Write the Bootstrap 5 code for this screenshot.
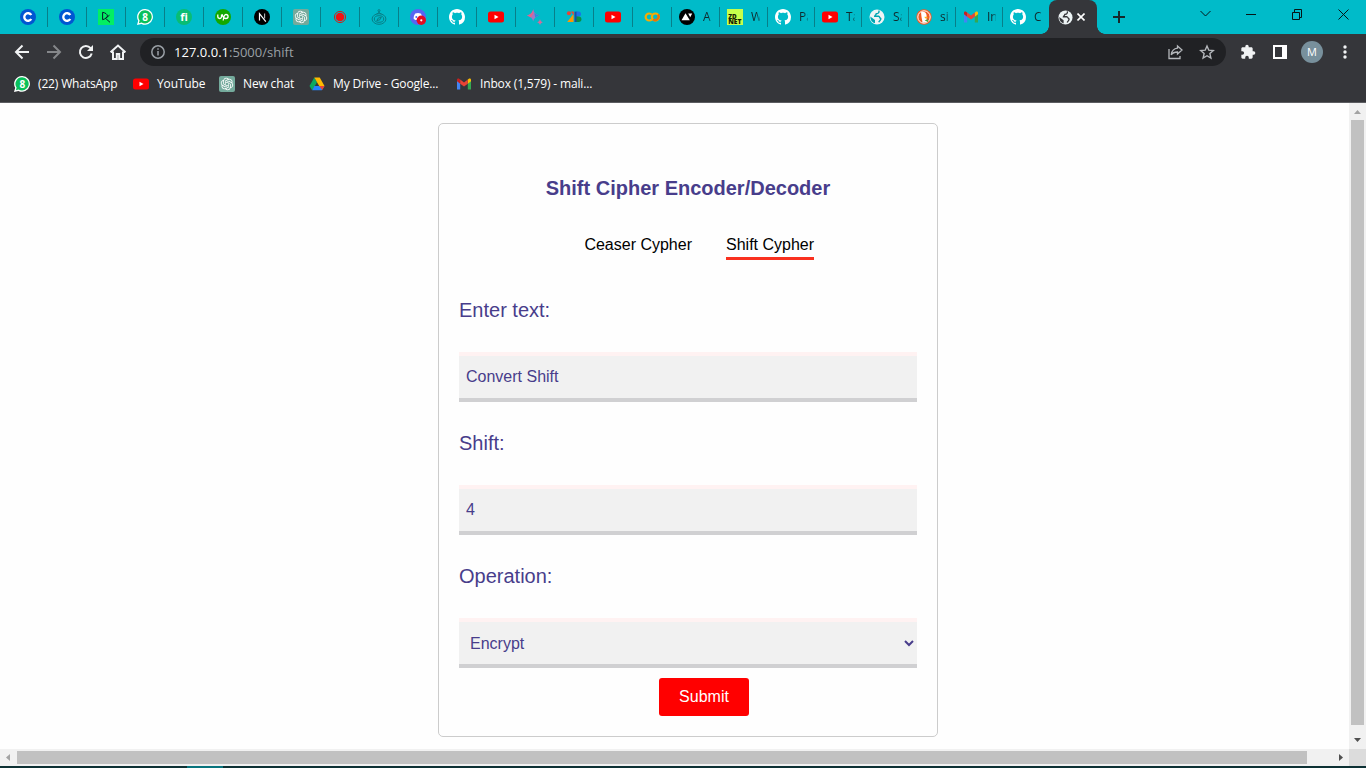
<!DOCTYPE html>
<html lang="en">
<head>
<meta charset="utf-8">
<meta name="viewport" content="width=device-width, initial-scale=1">
<title>Shift Cipher</title>
<link href="https://cdn.jsdelivr.net/npm/bootstrap@5.3.0/dist/css/bootstrap.min.css" rel="stylesheet">
<script src="https://cdn.jsdelivr.net/npm/bootstrap@5.3.0/dist/js/bootstrap.bundle.min.js" defer></script>
<style>
body { width:1366px; height:768px; overflow:hidden; font-family:"Open Sans","Noto Sans",sans-serif; font-size:12px; line-height:16px; }
svg { display:block; flex:none; }
.strip { height:34px; background:#00bbc9; padding-left:9px; }
.tab { height:34px; width:39px; padding-left:11px; position:relative; flex:none; }
.tab.wide { width:47px; padding-left:7px; gap:8px; color:#10292c; }
.tab.w48 { width:48px; }
.tab::after { content:""; position:absolute; right:0; top:7px; width:1px; height:20px; background:#087f89; }
.tab.nosep { width:46px; }
.tab.nosep::after { display:none; }
.tab span { width:9px; overflow:hidden; white-space:nowrap; -webkit-mask-image:linear-gradient(90deg,#000 55%,rgba(0,0,0,.3)); }
.tab-on { width:48px; height:34px; background:#35363a; border-radius:8px 8px 0 0; padding-left:9px; gap:4px; position:relative; flex:none; --g:#35363a; }
.tab-on::before,.tab-on::after { content:""; position:absolute; bottom:0; width:8px; height:8px; }
.tab-on::before { left:-8px; background:radial-gradient(circle at 0 0,transparent 7.5px,#35363a 8px); }
.tab-on::after { right:-8px; background:radial-gradient(circle at 100% 0,transparent 7.5px,#35363a 8px); }
.tools { height:36px; background:#35363a; padding:0 14px; }
.omni { height:28px; width:1086px; border-radius:14px; background:#202124; padding:0 11px; font-size:13px; margin-left:14px; color:#9aa0a6; }
.url { margin-left:9px; letter-spacing:.02px; }
.star { margin-left:16px; }
.ext { margin-left:14px; }
.side { margin-left:17px; }
.avatar { width:22px; height:22px; background:#78909c; font-size:11px; margin-left:14px; }
.dots { margin-left:20px; }
.marks { height:33px; background:#35363a; border-bottom:1px solid #5c5d61; padding:0 0 4px 14px; color:#fff; letter-spacing:-.15px; }
.marks span { white-space:nowrap; padding-left:8px; }
.view { height:646px; background:#fefefe; }
.cipher { width:500px; height:614px; margin:20px 0 0 438px; border:1px solid #ccc; border-radius:5px; padding:52px 20px 20px; color:#483d8b; background:#fefefe; font-family:"Liberation Sans",Arial,sans-serif; }
.cipher h1 { font-size:20px; line-height:24px; font-weight:700; margin:0 0 35px; }
.links { padding-left:125.4px; gap:34px; font-size:16px; line-height:20px; height:25px; }
.links a { color:#000; text-decoration:none; padding-bottom:2px; }
.links a.active { border-bottom:3px solid #f9301f; }
.cipher label { font-size:20px; line-height:24px; margin:29px 0 30px; display:block; }
.cipher .first { margin-top:38px; }
.field { width:100%; height:50px; display:block; border:0 solid; border-width:4px 0; border-color:#fff2f2 #fff #d0d0d2; background:#f1f1f1; color:#483d8b; font-size:16px; padding:0 7px; border-radius:0; outline:0; }
.field.pick { padding-right:0; }
.send { width:90px; height:38px; margin:10px 0 0 200px; background:#f00; color:#fff; border:0; border-radius:3px; font-size:16px; padding:0; line-height:36px; }
.vbar { width:17px; background:#f1f1f1; padding:0 2px; }
.vbar i { display:block; width:13px; height:605px; background:#c1c1c1; }
.hbar { height:17px; background:#f1f1f1; }
.hbar i { display:block; width:1290px; height:13px; background:#c1c1c1; }
.corner { width:17px; height:17px; background:#dcdcdc; }
.task { height:2px; background:#0d3134; padding-left:187px; }
.task i { display:block; width:36px; height:2px; background:#08747d; }
</style>
</head>
<body>
<svg class="position-absolute" width="0" height="0">
<defs>
<symbol id="c" viewBox="0 0 16 16"><circle cx="8" cy="8" r="8" fill="#0056d2"/><path d="M11.300 6A3.800 3.800 0 1 0 11.300 10" fill="none" stroke="#fff" stroke-width="2.300"/></symbol>
<symbol id="dc" viewBox="0 0 16 16"><path fill="#03ef62" d="M0 0h16v16H0z"/><path d="M4.600 10.700V3.300c2.700.5 4.800 1.900 4.800 3.600 0 1.600-2 3-4.800 3.800M11.500 6.200 7.500 9.300l4.500 4" fill="none" stroke="#05192d" stroke-width="1"/></symbol>
<symbol id="wa" viewBox="0 0 16 16"><path fill="#fff" d="M8.200 0a7.900 7.900 0 1 1-3.800 14.900L0 16l1.200-4.200A7.900 7.900 0 0 1 8.200 0z"/><path fill="#09c15b" d="M8.200 1.300a6.600 6.600 0 1 1-3.600 12.200L1.900 14.200l.7-2.600A6.600 6.600 0 0 1 8.200 1.300z"/><text x="8.2" y="11.7" text-anchor="middle" font-size="10" font-weight="700" font-family="Open Sans" fill="#fff">8</text></symbol>
<symbol id="fi" viewBox="0 0 16 16"><circle cx="8" cy="8" r="8" fill="#09bd73"/><text x="8" y="11.8" text-anchor="middle" font-size="11" font-weight="700" font-family="Open Sans" fill="#fff">fi</text></symbol>
<symbol id="up" viewBox="0 0 16 16"><circle cx="8" cy="8" r="8" fill="#13a800"/><path d="M2.800 5.400v2.200c0 2.500 3.700 2.500 3.700 0V5.400M7 5.200c1 3 2.100 4.300 3.900 4.300 2.900 0 2.900-4 0-4-1.800 0-2.200 1.700-2.700 6" fill="none" stroke="#fff" stroke-width="1.300"/></symbol>
<symbol id="nx" viewBox="0 0 16 16"><circle cx="8" cy="8" r="8"/><path d="M5.500 11.500V4.700l6.300 8" fill="none" stroke="#fff" stroke-width="1.200"/><path d="M10.600 4.500v5" stroke="#bbb" stroke-width="1.100"/></symbol>
<symbol id="ai" viewBox="0 0 16 16"><rect width="16" height="16" rx="2" fill="#74aa9c"/><path transform="translate(1.800 1.800) scale(.517)" fill="#fff" d="M22.2819 9.8211a5.9847 5.9847 0 0 0-.5157-4.9108 6.0462 6.0462 0 0 0-6.5098-2.9A6.0651 6.0651 0 0 0 4.9807 4.1818a5.9847 5.9847 0 0 0-3.9977 2.9 6.0462 6.0462 0 0 0 .7427 7.0966 5.98 5.98 0 0 0 .511 4.9107 6.051 6.051 0 0 0 6.5146 2.9001A5.9847 5.9847 0 0 0 13.2599 24a6.0557 6.0557 0 0 0 5.7718-4.2058 5.9894 5.9894 0 0 0 3.9977-2.9001 6.0557 6.0557 0 0 0-.7475-7.0729zm-9.022 12.6081a4.4755 4.4755 0 0 1-2.8764-1.0408l.1419-.0804 4.7783-2.7582a.7948.7948 0 0 0 .3927-.6813v-6.7369l2.02 1.1686a.071.071 0 0 1 .038.052v5.5826a4.504 4.504 0 0 1-4.4945 4.4944zm-9.6607-4.1254a4.4708 4.4708 0 0 1-.5346-3.0137l.142.0852 4.783 2.7582a.7712.7712 0 0 0 .7806 0l5.8428-3.3685v2.3324a.0804.0804 0 0 1-.0332.0615L9.74 19.9502a4.4992 4.4992 0 0 1-6.1408-1.6464zM2.3408 7.8956a4.485 4.485 0 0 1 2.3655-1.9728V11.6a.7664.7664 0 0 0 .3879.6765l5.8144 3.3543-2.0201 1.1685a.0757.0757 0 0 1-.071 0l-4.8303-2.7865A4.504 4.504 0 0 1 2.3408 7.872zm16.5963 3.8558L13.1038 8.364 15.1192 7.2a.0757.0757 0 0 1 .071 0l4.8303 2.7913a4.4944 4.4944 0 0 1-.6765 8.1042v-5.6772a.79.79 0 0 0-.407-.667zm2.0107-3.0231l-.142-.0852-4.7735-2.7818a.7759.7759 0 0 0-.7854 0L9.409 9.2297V6.8974a.0662.0662 0 0 1 .0284-.0615l4.8303-2.7866a4.4992 4.4992 0 0 1 6.6802 4.66zM8.3065 12.863l-2.02-1.1638a.0804.0804 0 0 1-.038-.0567V6.0742a4.4992 4.4992 0 0 1 7.3757-3.4537l-.142.0805L8.704 5.459a.7948.7948 0 0 0-.3927.6813zm1.0976-2.3654l2.602-1.4998 2.6069 1.4998v2.9994l-2.5974 1.4997-2.6067-1.4997Z"/></symbol>
<symbol id="rec" viewBox="0 0 16 16"><circle cx="8" cy="8" r="5.600" fill="none" stroke="#c0281f" stroke-width="1"/><circle cx="8" cy="8" r="4.300" fill="#f31111"/></symbol>
<symbol id="comp" viewBox="0 0 16 16"><g fill="none" stroke="#087e86" stroke-width="1"><circle cx="8" cy="1.600" r="1"/><path d="M8 2.800v1.400M5.500 5.200 8 3.500l2.500 1.700"/><ellipse cx="8" cy="10" rx="6.900" ry="5.300"/><ellipse cx="8" cy="10" rx="4.700" ry="3.300"/><path d="m5.800 11.700 1.300-2.500 3.200-1-1.300 2.500z"/></g></symbol>
<symbol id="disc" viewBox="0 0 16 16"><circle cx="8" cy="8" r="8" fill="#5865f2"/><path fill="#fff" d="M5.300 4.500c1.500-.7 3.900-.7 5.400 0 1.200 1.500 1.800 3.400 1.600 5.600-1.500 1-2.300 1-2.300 1H6s-.8 0-2.300-1c-.2-2.200.4-4.100 1.600-5.600z"/><circle cx="6.300" cy="8" r="1" fill="#5865f2"/><circle cx="11.300" cy="11.300" r="4.700" fill="#e20c20"/><circle cx="11.300" cy="11.300" r="1.100" fill="#fff"/></symbol>
<symbol id="gh" viewBox="0 0 16 16"><path fill="#fff" d="M8 0C3.580 0 0 3.580 0 8c0 3.540 2.290 6.530 5.470 7.590.4.070.55-.17.55-.38 0-.19-.01-.82-.01-1.490-2.010.37-2.530-.49-2.690-.94-.09-.23-.48-.94-.82-1.130-.28-.15-.68-.52-.01-.53.63-.01 1.080.58 1.230.82.72 1.210 1.870.87 2.330.66.07-.52.28-.87.51-1.070-1.780-.2-3.640-.89-3.640-3.950 0-.87.31-1.590.82-2.150-.08-.2-.36-1.020.08-2.120 0 0 .67-.21 2.200.82.64-.18 1.320-.27 2-.27s1.360.09 2 .27c1.530-1.040 2.200-.82 2.200-.82.44 1.100.16 1.920.08 2.120.51.56.82 1.270.82 2.150 0 3.070-1.870 3.750-3.650 3.950.29.25.54.73.54 1.480 0 1.070-.01 1.930-.01 2.200 0 .21.15.46.55.38A8.010 8.010 0 0 0 16 8c0-4.420-3.580-8-8-8"/></symbol>
<symbol id="yt" viewBox="0 0 16 16"><rect y="2.400" width="16" height="11.200" rx="2.500" fill="#f00"/><path fill="#fff" d="m6.500 5.700 4 2.300-4 2.300z"/></symbol>
<symbol id="spark" viewBox="0 0 16 16"><path fill="#a477c4" d="M6.200.3c.9 3.500 2.300 5 6.300 6.200-4 1.200-5.400 2.500-6.300 6-.9-3.500-2.200-4.800-6.200-6C4 5.300 5.300 3.800 6.200.3z"/><path fill="#e0648f" d="M6.200.3v4.500L4 8.500 0 6.500C4 5.300 5.300 3.800 6.200.3z"/><path fill="#268fe0" d="M7.200 3.600c.9 1.500 2.300 2.200 5.300 2.900-2 .6-3.300 1.200-4.300 2z"/><path fill="#d66a9b" d="M13 10.300c.5 1.700 1.200 2.400 2.900 2.900-1.700.5-2.400 1.200-2.900 2.900-.5-1.700-1.200-2.400-2.900-2.900 1.700-.5 2.400-1.200 2.900-2.900z"/></symbol>
<symbol id="ab" viewBox="0 0 16 16"><circle cx="2.900" cy="4.300" r="2" fill="#ea4335"/><path fill="#ff9800" d="M7.500 5v8H1.200z"/><path fill="#ea4335" d="M4.800 2.600h3v4z"/><path fill="#174ea6" d="M8.500 2.600h3v10.400h-3z"/><path fill="#1a73e8" d="M10.500 2.600h2a2.500 2.500 0 0 1 0 5h-2z"/><path fill="#0c8f45" d="M10.500 7.600h2.200a2.700 2.700 0 0 1 0 5.400h-2.200z"/></symbol>
<symbol id="co" viewBox="0 0 16 16"><circle cx="11.400" cy="8" r="3.500" fill="none" stroke="#f9ab00" stroke-width="2.200"/><path d="M7.700 5.600a3.500 3.500 0 1 0 0 4.800" fill="none" stroke="#f9ab00" stroke-width="2.200"/><path d="M9 10.400a3.500 3.500 0 0 0 4.900-4.900M2 10.600 6.800 5.300" fill="none" stroke="#e8710a" stroke-width="0"/><path d="M9 10.400a3.500 3.500 0 0 0 4.900-4.900" fill="none" stroke="#e8710a" stroke-width="2.200"/></symbol>
<symbol id="av" viewBox="0 0 16 16"><circle cx="8" cy="8" r="8"/><path fill="#fff" d="m6.500 4.300 4.300 7H2.500zM9.200 4.500h4l-2 3.700z"/></symbol>
<symbol id="zd" viewBox="0 0 16 16"><path fill="#c6ff4b" d="M0 0h16v16H0z"/><g font-family="Open Sans" font-size="6" font-weight="800" fill="#172000"><text x="1.2" y="10" textLength="8.500" lengthAdjust="spacingAndGlyphs">ZD</text><text x="1.2" y="14.700" textLength="13.300" lengthAdjust="spacingAndGlyphs">NET</text></g></symbol>
<symbol id="globe" viewBox="0 0 16 16"><circle cx="8" cy="8" r="7.500" fill="#edf4f5"/><path d="M10 1.500c.3 2.300-.7 3-2.700 3.200-.5 1.800-1.300 1.500-1.500 2.500h3.700c1.500.6.8 1.800 2.300 2.300.5 1.500-1.300 2-2 3.800" fill="none" stroke="var(--g)" stroke-width="1.400"/><path fill="var(--g)" d="M1.300 7.500 6 11v3.300C3 13.500 1.300 11 1.300 7.500z"/></symbol>
<symbol id="duck" viewBox="0 0 16 16"><circle cx="8" cy="8" r="7.700" fill="#f15a24"/><circle cx="8" cy="8" r="6.200" fill="none" stroke="#fff" stroke-width="1"/><path fill="#fff" d="M5 3.200c3-1.200 5.600.4 5.600 3.400 0 2.500-.5 3 .6 6.500l-4.600.7L5.500 8z"/><path fill="#fbb518" d="m8.500 7.700 4 .4-3.400 1.500z"/><path fill="#46a943" d="m8.600 11.300 3.600-1v2.900z"/></symbol>
<symbol id="gm" viewBox="0 0 16 16"><path fill="#4285f4" d="M1 4v9.400h3.200V7z"/><path fill="#34a853" d="M11.800 7v6.400H15V4z"/><path fill="#c5221f" d="M1 5.200V3.800c0-1.200 1.500-1.600 2.400-.9l.8.6v4.200z"/><path fill="#fbbc04" d="M15 5.200V3.800c0-1.200-1.500-1.600-2.400-.9l-.8.6v4.200z"/><path fill="#ea4335" d="M4.200 3.500 8 6.400l3.800-2.900v4.200L8 10.600 4.200 7.700z"/></symbol>
<symbol id="dr" viewBox="0 0 16 16"><path fill="#0da960" d="M5.300 1.500 8 6.200 3.200 14.300.5 10z"/><path fill="#ffba00" d="M5.300 1.500h5.400l4.800 8.500h-5.300z"/><path fill="#2684fc" d="M5.300 10h10.200l-2.700 4.300H3.200z"/><path fill="#ea4335" d="M10.200 10h5.300l-2.300 4z"/></symbol>
</defs></svg>

<header>
<div class="strip d-flex align-items-center">
<div class="tab d-flex align-items-center"><svg width="16" height="16"><use href="#c"/></svg></div>
<div class="tab d-flex align-items-center"><svg width="16" height="16"><use href="#c"/></svg></div>
<div class="tab d-flex align-items-center"><svg width="16" height="16"><use href="#dc"/></svg></div>
<div class="tab d-flex align-items-center"><svg width="16" height="16"><use href="#wa"/></svg></div>
<div class="tab d-flex align-items-center"><svg width="16" height="16"><use href="#fi"/></svg></div>
<div class="tab d-flex align-items-center"><svg width="16" height="16"><use href="#up"/></svg></div>
<div class="tab d-flex align-items-center"><svg width="16" height="16"><use href="#nx"/></svg></div>
<div class="tab d-flex align-items-center"><svg width="16" height="16"><use href="#ai"/></svg></div>
<div class="tab d-flex align-items-center"><svg width="16" height="16"><use href="#rec"/></svg></div>
<div class="tab d-flex align-items-center"><svg width="16" height="16"><use href="#comp"/></svg></div>
<div class="tab d-flex align-items-center"><svg width="16" height="16"><use href="#disc"/></svg></div>
<div class="tab d-flex align-items-center"><svg width="16" height="16"><use href="#gh"/></svg></div>
<div class="tab d-flex align-items-center"><svg width="16" height="16"><use href="#yt"/></svg></div>
<div class="tab d-flex align-items-center"><svg width="16" height="16"><use href="#spark"/></svg></div>
<div class="tab d-flex align-items-center"><svg width="16" height="16"><use href="#ab"/></svg></div>
<div class="tab d-flex align-items-center"><svg width="16" height="16"><use href="#yt"/></svg></div>
<div class="tab d-flex align-items-center"><svg width="16" height="16"><use href="#co"/></svg></div>
<div class="tab wide w48 d-flex align-items-center"><svg width="16" height="16"><use href="#av"/></svg><span>A</span></div>
<div class="tab wide w48 d-flex align-items-center"><svg width="16" height="16"><use href="#zd"/></svg><span>W</span></div>
<div class="tab wide d-flex align-items-center"><svg width="16" height="16"><use href="#gh"/></svg><span>Pa</span></div>
<div class="tab wide d-flex align-items-center"><svg width="16" height="16"><use href="#yt"/></svg><span>Ta</span></div>
<div class="tab wide d-flex align-items-center" style="--g:#00a6b2"><svg width="16" height="16"><use href="#globe"/></svg><span>Sa</span></div>
<div class="tab wide d-flex align-items-center"><svg width="16" height="16"><use href="#duck"/></svg><span>si</span></div>
<div class="tab wide d-flex align-items-center"><svg width="16" height="16"><use href="#gm"/></svg><span>In</span></div>
<div class="tab wide nosep d-flex align-items-center"><svg width="16" height="16"><use href="#gh"/></svg><span>C</span></div>
<div class="tab-on d-flex align-items-center"><svg width="15" height="15"><use href="#globe"/></svg><svg width="8" height="8" stroke="#fff" stroke-width="1.600"><path d="m.5.500 7 7m0-7-7 7"/></svg></div>
<svg class="ms-3" width="12" height="12" stroke="#17282b" stroke-width="2"><path d="M0 6h12M6 0v12"/></svg>
<svg class="ms-auto me-3 mb-2" width="150" height="16" fill="none" stroke="#061416" stroke-width="1"><path d="m.5 6 5 5 5-5M46 9.500h10M92.500 7.500h7v7h-7zM94.500 7.500v-3h7v8h-2M138.500 4.500l10 10m0-10-10 10"/></svg>
</div>

<div class="tools d-flex align-items-center">
<svg width="112" height="20" fill="none" stroke="#f1f3f4" stroke-width="2"><path d="M15 10H2m6.500-6.500L2 10l6.500 6.500"/><path stroke="#85878a" d="M33 10h13m-6.500-6.500L46 10l-6.500 6.500"/><path d="M76.600 6.200A6 6 0 1 0 77.700 11.500"/><path fill="#f1f3f4" stroke="none" d="M79 3v6h-6z"/><path d="M99 9.500V17h3.800v-5h2.400v5h3.800V9.500M96.500 10.300 104 3.500l7.500 6.800"/></svg>
<div class="omni d-flex align-items-center">
<svg width="14" height="14" fill="none" stroke="#9aa0a6" stroke-width="1.500"><circle cx="7" cy="7" r="6.200"/><path d="M7 6v4.500M7 3.300v1.500"/></svg>
<div class="url"><span class="text-white">127.0.0.1</span>:5000/shift</div>
<svg class="ms-auto" width="16" height="16" fill="none" stroke="#b5b8bc" stroke-width="1.300"><path d="M2 5v9.500h11V12"/><path d="M10.500 2 15 6l-4.500 4V8c-3 0-5 .8-6.300 2.800.5-3.500 2.800-6.200 6.300-6.600z"/></svg>
<svg class="star" width="16" height="16" fill="none" stroke="#b5b8bc" stroke-width="1.400"><path d="m8 2 1.800 4.200 4.500.4-3.400 3 1 4.400L8 11.700 4.100 14l1-4.400-3.400-3 4.500-.4z"/></svg>
</div>
<svg class="ext" width="16" height="16" viewBox="0 0 24 24" fill="#f1f3f4"><path d="M20.500 11H19V7c0-1.100-.9-2-2-2h-4V3.500a2.500 2.500 0 0 0-5 0V5H4c-1.100 0-2 .9-2 2v3.800h1.500a2.700 2.700 0 0 1 0 5.400H2V20c0 1.100.9 2 2 2h3.800v-1.500a2.700 2.700 0 0 1 5.400 0V22H17c1.100 0 2-.9 2-2v-4h1.500a2.500 2.500 0 0 0 0-5z"/></svg>
<svg class="side" width="14" height="14"><path fill="#fff" fill-rule="evenodd" d="M0 0h14v14H0zM2 2v10h7V2z"/></svg>
<div class="avatar rounded-circle text-white d-flex align-items-center justify-content-center">M</div>
<svg class="dots" width="4" height="14" fill="#f1f3f4"><circle cx="2" cy="2" r="1.700"/><circle cx="2" cy="7" r="1.700"/><circle cx="2" cy="12" r="1.700"/></svg>
</div>
<div class="marks d-flex align-items-center">
<svg width="16" height="16"><use href="#wa"/></svg><span style="width:103px">(22) WhatsApp</span>
<svg width="16" height="16"><use href="#yt"/></svg><span style="width:70px">YouTube</span>
<svg width="16" height="16"><use href="#ai"/></svg><span style="width:74px">New chat</span>
<svg width="16" height="16"><use href="#dr"/></svg><span style="width:131px">My Drive - Google...</span>
<svg width="16" height="16"><use href="#gm"/></svg><span>Inbox (1,579) - mali...</span>
</div>
</header>

<div class="d-flex">
<main class="view flex-grow-1 overflow-hidden">
<form class="cipher" onsubmit="return false">
<h1 class="text-center">Shift Cipher Encoder/Decoder</h1>
<nav class="links d-flex"><a href="#">Ceaser Cypher</a><a class="active" href="#">Shift Cypher</a></nav>
<label class="first" for="txt">Enter text:</label>
<input class="field" id="txt" type="text" value="Convert Shift">
<label for="num">Shift:</label>
<input class="field" id="num" type="text" value="4">
<label for="op">Operation:</label>
<select class="field pick" id="op"><option>Encrypt</option><option>Decrypt</option></select>
<button class="send" type="submit">Submit</button>
</form>
</main>
<div class="vbar d-flex flex-column align-items-center justify-content-between">
<svg width="13" height="17" fill="#a3a3a3"><path d="M3 11h7L6.500 7z"/></svg><i></i><svg width="13" height="24" fill="#505050"><path d="M3 13h7l-3.500 4z"/></svg>
</div>
</div>
<div class="hbar d-flex align-items-center">
<svg width="17" height="17" fill="#a3a3a3"><path d="M10 5v7L6 8.500z"/></svg><i></i><svg class="ms-auto" width="17" height="17" fill="#505050"><path d="M7 5v7l4-3.500z"/></svg><div class="corner"></div>
</div>
<div class="task"><i></i></div>
</body>
</html>
